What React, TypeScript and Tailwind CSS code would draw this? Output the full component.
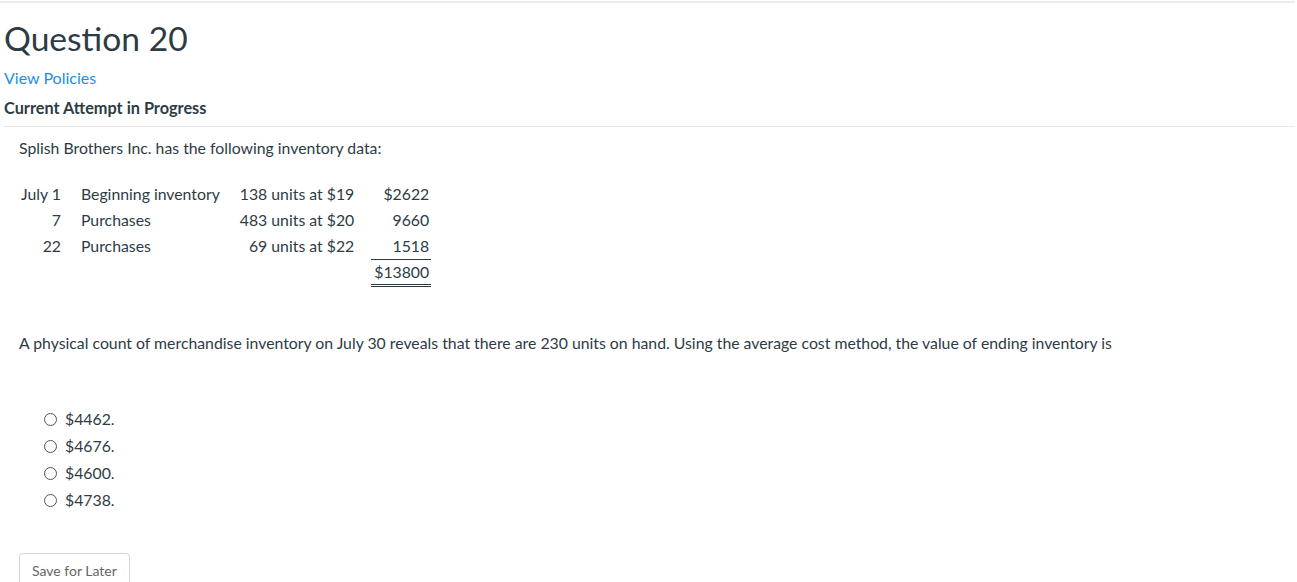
const rows = [
  { date: "July 1", label: "Beginning inventory", units: "138 units at $19", cost: "$2622" },
  { date: "7", label: "Purchases", units: "483 units at $20", cost: "9660" },
  { date: "22", label: "Purchases", units: "69 units at $22", cost: "1518" },
];

const options = ["$4462.", "$4676.", "$4600.", "$4738."];

export default function App() {
  return (
    <div className="min-h-screen bg-white text-[#2d3b45] font-['Lato','Liberation_Sans',sans-serif]">
      <div className="border-t-2 border-[#ececec] mt-[1px] mr-[2px]" />

      {/* Header */}
      <div className="pl-[4px]">
        <h1 className="text-[33.6px] leading-[40px] mt-[15px] font-normal">Question 20</h1>
        <a href="#" className="block text-[16px] text-[#1b8fe0] leading-[20px] mt-[10px]">
          View Policies
        </a>
        <p className="text-[16.3px] font-bold leading-[20px] mt-[10px]">Current Attempt in Progress</p>
      </div>
      <div className="border-t border-[#e6e6e6] mt-[8px] ml-[4px] mr-[2px]" />

      {/* Question body */}
      <div className="pl-[19px] text-[15.8px]">
        <p className="leading-[20px] mt-[11px]">Splish Brothers Inc. has the following inventory data:</p>

        <table className="mt-[23px] border-collapse">
          <tbody>
            {rows.map((r) => (
              <tr key={r.date} className="h-[26px]">
                <td className="text-right pr-[20px] pl-[2px] align-middle">{r.date}</td>
                <td className="pr-[20px] align-middle">{r.label}</td>
                <td className="text-right pr-[17px] align-middle">{r.units}</td>
                <td
                  className={
                    r.date === "22"
                      ? "text-right align-middle border-b border-[#2d3b45] pl-[3px] pr-[2px]"
                      : "text-right align-middle pl-[3px] pr-[2px]"
                  }
                >
                  {r.cost}
                </td>
              </tr>
            ))}
            <tr className="h-[26px]">
              <td />
              <td />
              <td />
              <td className="text-right align-middle pl-[3px] pr-[2px] border-b-[3px] border-double border-[#2d3b45]">
                $13800
              </td>
            </tr>
          </tbody>
        </table>

        <p className="leading-[20px] mt-[46px]">
          A physical count of merchandise inventory on July 30 reveals that there are 230 units on hand. Using the
          average cost method, the value of ending inventory is
        </p>

        <div className="mt-[53px] ml-[25px] flex flex-col">
          {options.map((o) => (
            <label key={o} className="flex items-center h-[27px] gap-[8px]">
              <span className="w-[13px] h-[13px] rounded-full border border-[#555] bg-white" />
              <span>{o}</span>
            </label>
          ))}
        </div>

        <button className="mt-[39px] h-[36px] px-[12px] border border-[#d7d7d7] rounded-[4px] bg-white text-[14px] text-[#666] flex items-center">
          Save for Later
        </button>
      </div>
    </div>
  );
}
